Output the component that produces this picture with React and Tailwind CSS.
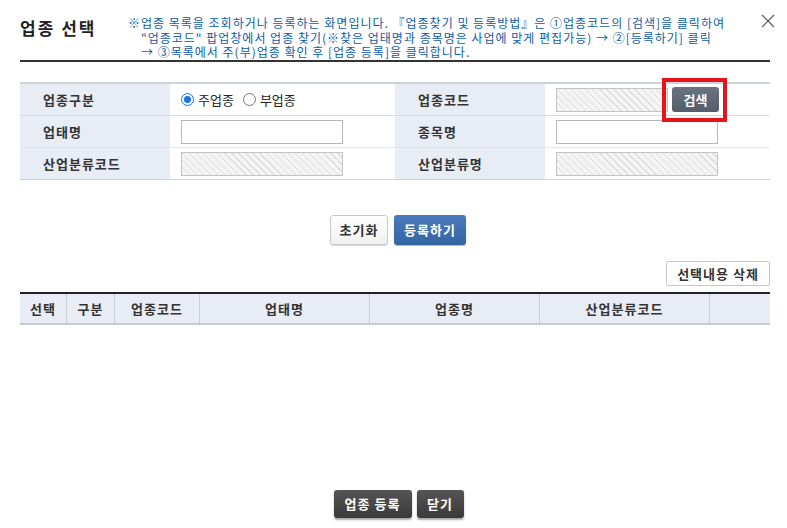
import React, { useState } from 'react';

const font = "font-['Noto_Sans_CJK_KR','Noto_Sans',sans-serif]";
const hatch =
  'bg-[repeating-linear-gradient(45deg,#dcdcdc_0px,#dcdcdc_1px,#f4f4f4_1px,#f4f4f4_5px)]';

const columns = [
  { label: '선택', w: 'w-[47px]' },
  { label: '구분', w: 'w-[48px]' },
  { label: '업종코드', w: 'w-[85px]' },
  { label: '업태명', w: 'w-[170px]' },
  { label: '업종명', w: 'w-[170px]' },
  { label: '산업분류코드', w: 'w-[170px]' },
  { label: '', w: 'flex-1' },
];

const Label = ({ children }) => (
  <div className="w-[150px] h-full flex items-center pl-[23px] bg-[#e8ecf5] text-[13px] font-bold text-[#333] tracking-[1px]">
    {children}
  </div>
);

const Radio = ({ checked, label, onClick }) => (
  <button onClick={onClick} className="flex items-center gap-[4px]">
    <span
      className={`w-[13px] h-[13px] rounded-full border flex items-center justify-center ${
        checked ? 'border-[#1a73e8]' : 'border-[#777]'
      }`}
    >
      {checked && <span className="w-[7px] h-[7px] rounded-full bg-[#1a73e8]" />}
    </span>
    <span className="text-[13px] text-[#222]">{label}</span>
  </button>
);

const App = () => {
  const [kind, setKind] = useState('main');

  return (
    <div className={`${font} w-[787px] h-[528px] bg-white relative flex flex-col`}>
      <div className="pl-[20px] pr-[17px]">
        {/* header */}
        <div className="flex items-start h-[62px] border-b-2 border-[#333]">
          <h1 className="text-[17px] font-bold text-[#222] mt-[15px] w-[108px] tracking-[2px]">업종 선택</h1>
          <div className="text-[12px] leading-[14.5px] text-[#0b5cab] mt-[16px] tracking-[1px] whitespace-nowrap">
            <p>※업종 목록을 조회하거나 등록하는 화면입니다. 『업종찾기 및 등록방법』은 ①업종코드의 [검색]을 클릭하여</p>
            <p className="pl-[13px]">"업종코드" 팝업창에서 업종 찾기(※찾은 업태명과 종목명은 사업에 맞게 편집가능) → ②[등록하기] 클릭</p>
            <p className="pl-[13px]">→ ③목록에서 주(부)업종 확인 후 [업종 등록]을 클릭합니다.</p>
          </div>
        </div>
        <button className="absolute right-[12px] top-[14px] text-[#555]">
          <svg width="14" height="14" viewBox="0 0 14 14">
            <path d="M1 1 L13 13 M13 1 L1 13" stroke="#555" strokeWidth="1.1" />
          </svg>
        </button>

        {/* form */}
        <div className="mt-[20px] border-t-2 border-[#ccd3de]">
          <div className="flex h-[32px] border-b border-[#d5dbe4]">
            <Label>업종구분</Label>
            <div className="w-[225px] flex items-center pl-[11px] gap-[9px]">
              <Radio checked={kind === 'main'} label="주업종" onClick={() => setKind('main')} />
              <Radio checked={kind === 'sub'} label="부업종" onClick={() => setKind('sub')} />
            </div>
            <Label>업종코드</Label>
            <div className="flex-1 flex items-center pl-[11px] gap-[4px]">
              <div className={`w-[112px] h-[24px] border border-[#c4c4c4] ${hatch}`} />
              <button className="w-[47px] h-[25px] rounded-[3px] bg-[linear-gradient(#6b7380,#555d6a)] text-white text-[13px] font-bold">
                검색
              </button>
            </div>
          </div>
          <div className="flex h-[32px] border-b border-[#e3e7ed]">
            <Label>업태명</Label>
            <div className="w-[225px] flex items-center pl-[11px]">
              <div className="w-[162px] h-[24px] border border-[#b8b8b8] bg-white" />
            </div>
            <Label>종목명</Label>
            <div className="flex-1 flex items-center pl-[11px]">
              <div className="w-[162px] h-[24px] border border-[#b8b8b8] bg-white" />
            </div>
          </div>
          <div className="flex h-[32px] border-b border-[#ccd3de]">
            <Label>산업분류코드</Label>
            <div className="w-[225px] flex items-center pl-[11px]">
              <div className={`w-[162px] h-[24px] border border-[#c4c4c4] ${hatch}`} />
            </div>
            <Label>산업분류명</Label>
            <div className="flex-1 flex items-center pl-[11px]">
              <div className={`w-[162px] h-[24px] border border-[#c4c4c4] ${hatch}`} />
            </div>
          </div>
        </div>

        {/* actions */}
        <div className="flex justify-center gap-[6px] mt-[35px] pl-[6px]">
          <button className="w-[58px] h-[30px] rounded-[3px] border border-[#c8c8c8] bg-[linear-gradient(#fff,#f0f0f0)] shadow-[0_1px_1px_rgba(0,0,0,0.15)] text-[13px] font-bold text-[#333] tracking-[1px]">
            초기화
          </button>
          <button className="w-[72px] h-[30px] rounded-[3px] bg-[linear-gradient(#4a7bbd,#3563a2)] shadow-[0_1px_1px_rgba(0,0,0,0.3)] text-[13px] font-bold text-white tracking-[1px]">
            등록하기
          </button>
        </div>

        <div className="flex justify-end mt-[16px]">
          <button className="w-[104px] h-[25px] rounded-[2px] border border-[#c8c8c8] bg-white text-[13px] font-bold text-[#333] tracking-[1px]">
            선택내용 삭제
          </button>
        </div>

        {/* list header */}
        <div className="mt-[6px] flex h-[33px] border-t-2 border-[#222] border-b-2 border-b-[#c4cad3] bg-[#e8ecf5]">
          {columns.map((c, i) => (
            <div
              key={i}
              className={`${c.w} flex items-center justify-center text-[13px] font-bold text-[#333] tracking-[1px] ${
                i < columns.length - 1 ? 'border-r border-[#c9cfd9]' : ''
              }`}
            >
              {c.label}
            </div>
          ))}
        </div>
      </div>

      {/* footer */}
      <div className="mt-auto mb-[10px] flex justify-center gap-[5px] pl-[10px]">
        <button className="w-[78px] h-[28px] rounded-[3px] bg-[linear-gradient(#555,#3a3a3a)] shadow-[0_2px_2px_rgba(0,0,0,0.35)] text-[13px] font-bold text-white tracking-[1px]">
          업종 등록
        </button>
        <button className="w-[47px] h-[28px] rounded-[3px] bg-[linear-gradient(#555,#3a3a3a)] shadow-[0_2px_2px_rgba(0,0,0,0.35)] text-[13px] font-bold text-white tracking-[1px]">
          닫기
        </button>
      </div>

      {/* highlight around search */}
      <div className="absolute left-[662px] top-[78px] w-[65px] h-[44px] border-4 border-[#e8141c] pointer-events-none" />
    </div>
  );
};

export default App;
